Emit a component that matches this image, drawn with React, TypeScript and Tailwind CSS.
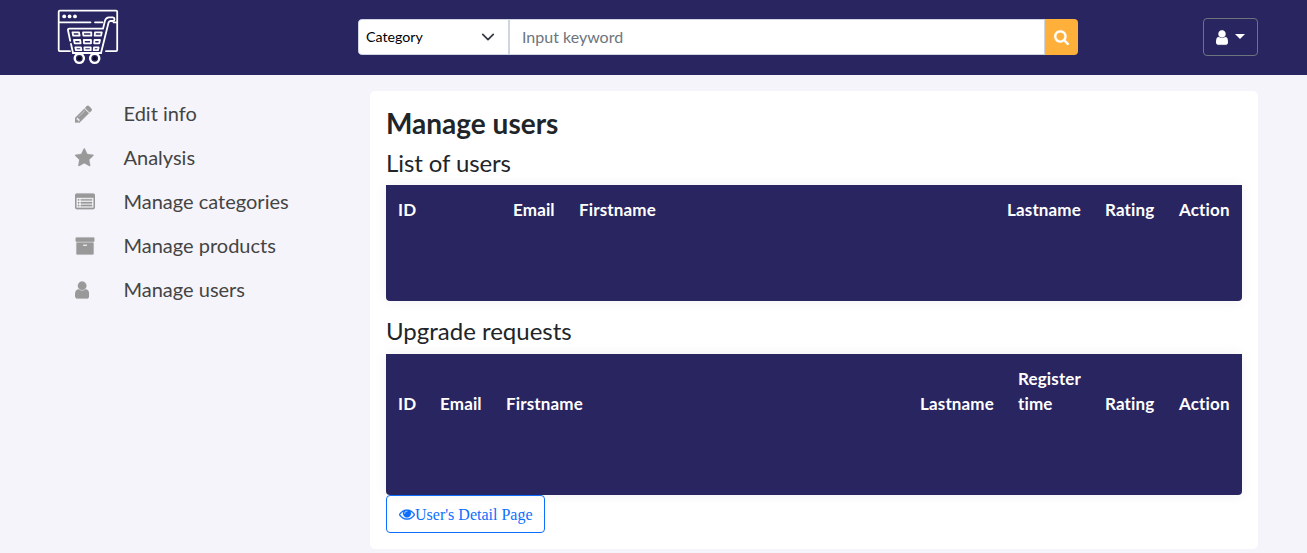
import React from "react";

type Glyph = { box: string; d: string };

const glyphs: Record<string, Glyph> = {
  pencil: {
    box: "128 0 1536 1792",
    d: "M491 1536l91-91-235-235-91 91v107h128v128h107zm523-928q0-22-22-22-10 0-17 7l-542 542q-7 7-7 17 0 22 22 22 10 0 17-7l542-542q7-7 7-17zm-54-192l416 416-832 832h-416v-416zm683 96q0 53-37 90l-166 166-416-416 166-165q36-38 90-38 53 0 91 38l235 234q37 39 37 91z",
  },
  star: {
    box: "64 0 1664 1792",
    d: "M1728 647q0 22-26 48l-363 354 86 500q1 7 1 20 0 21-10.5 35.5t-30.5 14.5q-19 0-40-12l-449-236-449 236q-22 12-40 12-21 0-31.5-14.5t-10.5-35.5q0-6 2-20l86-500-364-354q-25-27-25-48 0-37 56-46l502-73 225-455q19-41 49-41t49 41l225 455 502 73q56 9 56 46z",
  },
  list: {
    box: "0 0 1792 1792",
    d: "M384 1184v64q0 13-9.5 22.5t-22.5 9.5h-64q-13 0-22.5-9.5t-9.5-22.5v-64q0-13 9.5-22.5t22.5-9.5h64q13 0 22.5 9.5t9.5 22.5zM384 928v64q0 13-9.5 22.5t-22.5 9.5h-64q-13 0-22.5-9.5t-9.5-22.5v-64q0-13 9.5-22.5t22.5-9.5h64q13 0 22.5 9.5t9.5 22.5zM384 672v64q0 13-9.5 22.5t-22.5 9.5h-64q-13 0-22.5-9.5t-9.5-22.5v-64q0-13 9.5-22.5t22.5-9.5h64q13 0 22.5 9.5t9.5 22.5zM1536 1184v64q0 13-9.5 22.5t-22.5 9.5h-960q-13 0-22.5-9.5t-9.5-22.5v-64q0-13 9.5-22.5t22.5-9.5h960q13 0 22.5 9.5t9.5 22.5zM1536 928v64q0 13-9.5 22.5t-22.5 9.5h-960q-13 0-22.5-9.5t-9.5-22.5v-64q0-13 9.5-22.5t22.5-9.5h960q13 0 22.5 9.5t9.5 22.5zM1536 672v64q0 13-9.5 22.5t-22.5 9.5h-960q-13 0-22.5-9.5t-9.5-22.5v-64q0-13 9.5-22.5t22.5-9.5h960q13 0 22.5 9.5t9.5 22.5zM1664 1376v-832q0-13-9.5-22.5t-22.5-9.5h-1472q-13 0-22.5 9.5t-9.5 22.5v832q0 13 9.5 22.5t22.5 9.5h1472q13 0 22.5-9.5t9.5-22.5zM1792 288v1088q0 66-47 113t-113 47h-1472q-66 0-113-47t-47-113v-1088q0-66 47-113t113-47h1472q66 0 113 47t47 113z",
  },
  archive: {
    box: "0 0 1792 1792",
    d: "M1088 832q0-26-19-45t-45-19h-256q-26 0-45 19t-19 45 19 45 45 19h256q26 0 45-19t19-45zm576-192v960q0 26-19 45t-45 19h-1408q-26 0-45-19t-19-45v-960q0-26 19-45t45-19h1408q26 0 45 19t19 45zm64-448v256q0 26-19 45t-45 19h-1536q-26 0-45-19t-19-45v-256q0-26 19-45t45-19h1536q26 0 45 19t19 45z",
  },
  user: {
    box: "256 0 1280 1792",
    d: "M1536 1399q0 109-62.5 187t-150.5 78h-854q-88 0-150.5-78t-62.5-187q0-85 8.5-160.5t31.5-152 58.5-131 94-89 134.5-34.5q131 128 313 128t313-128q76 0 134.5 34.5t94 89 58.5 131 31.5 152 8.5 160.5zm-256-887q0 159-112.5 271.5t-271.5 112.5-271.5-112.5-112.5-271.5 112.5-271.5 271.5-112.5 271.5 112.5 112.5 271.5z",
  },
  eye: {
    box: "0 0 1792 1792",
    d: "M1664 960q-152-236-381-353 61 104 61 225 0 185-131.5 316.5t-316.5 131.5-316.5-131.5-131.5-316.5q0-121 61-225-229 117-381 353 133 205 333.5 326.5t434.5 121.5 434.5-121.5 333.5-326.5zm-720-384q0-20-14-34t-34-14q-125 0-214.5 89.5t-89.5 214.5q0 20 14 34t34 14 34-14 14-34q0-86 61-147t147-61q20 0 34-14t14-34zm848 384q0 34-20 69-140 230-376.5 368.5t-499.5 138.5-499.5-139-376.5-368q-20-35-20-69t20-69q140-229 376.5-368t499.5-139 499.5 139 376.5 368q20 35 20 69z",
  },
  search: {
    box: "64 0 1664 1792",
    d: "M1216 832q0-185-131.5-316.5t-316.5-131.5-316.5 131.5-131.5 316.5 131.5 316.5 316.5 131.5 316.5-131.5 131.5-316.5zm512 832q0 52-38 90t-90 38q-54 0-90-38l-343-342q-179 124-399 124-143 0-273.5-55.5t-225-150-150-225-55.5-273.5 55.5-273.5 150-225 225-150 273.5-55.5 273.5 55.5 225 150 150 225 55.5 273.5q0 220-124 399l343 343q37 37 37 90z",
  },
};

function Icon({ name, className }: { name: string; className: string }) {
  const g = glyphs[name];
  return (
    <svg viewBox={g.box} fill="currentColor" stroke="currentColor" strokeWidth="24" className={className} aria-hidden="true">
      <path d={g.d} fillRule={name === "list" ? "evenodd" : "nonzero"} />
    </svg>
  );
}

function Logo() {
  return (
    <svg width="62" height="56" viewBox="57 9 62 56" fill="none" stroke="#fff" strokeWidth="1.8" strokeLinecap="round" strokeLinejoin="round">
      <path d="M70 51.2H59.8Q58.7 51.2 58.7 50.1V11.8Q58.7 10.7 59.8 10.7H116Q117.2 10.7 117.2 11.8V50.1Q117.2 51.2 116 51.2H106" />
      <path d="M59 22.3H90.5M95 22.3H102.5M113.5 22.3H117" />
      <g fill="#fff" stroke="none">
        <circle cx="64.2" cy="16.4" r="1.9" />
        <circle cx="69.6" cy="16.4" r="1.9" />
        <circle cx="75" cy="16.4" r="1.9" />
      </g>
      <path d="M73 53L71 44M70.2 40.8L68 30.2Q67.7 28.7 69.3 28.7H103L105 20.6Q106 17.3 109 17.3H112.8Q114.5 17.5 114.5 19.2T112.8 21H110.6Q109 21.1 108.5 22.8L101 53" />
      <path d="M72.5 32.4H79L79.6 35.7H73.2ZM83 32.4H91.3V35.7H83.4ZM95 32.4H101.8L101 35.7H94.7ZM74 40H80.2L80.6 43.3H74.7ZM83.8 40H91V43.3H84ZM94.5 40H100L99.2 43.3H94.2ZM75.3 47.3H80.9L81.4 50.2H76ZM84.4 47.3H90.7V50.2H84.6ZM94 47.3H98.6L98 50.2H93.7Z" />
      <path d="M73 53H101" />
      <circle cx="79.3" cy="58.3" r="4.6" strokeWidth="2.4" fill="#292560" />
      <circle cx="94.7" cy="58.3" r="4.6" strokeWidth="2.4" fill="#292560" />
      <circle cx="79.3" cy="58.3" r="2" stroke="none" fill="#0b0918" />
      <circle cx="94.7" cy="58.3" r="2" stroke="none" fill="#0b0918" />
    </svg>
  );
}

const menu = [
  { icon: "pencil", label: "Edit info", size: "h-5 w-[17.14px]" },
  { icon: "star", label: "Analysis", size: "h-5 w-[18.57px]" },
  { icon: "list", label: "Manage categories", size: "h-5 w-5" },
  { icon: "archive", label: "Manage products", size: "h-5 w-5" },
  { icon: "user", label: "Manage users", size: "h-5 w-[14.28px]" },
];

const usersColumns = [
  { label: "ID", width: "w-[115px]" },
  { label: "Email", width: "w-[66px]" },
  { label: "Firstname", width: "w-[428px]" },
  { label: "Lastname", width: "w-[98px]" },
  { label: "Rating", width: "w-[74px]" },
  { label: "Action", width: "w-[75px]" },
];

const requestColumns = [
  { label: "ID", width: "w-[42px]" },
  { label: "Email", width: "w-[66px]" },
  { label: "Firstname", width: "w-[414px]" },
  { label: "Lastname", width: "w-[98px]" },
  { label: "Register time", width: "w-[87px]" },
  { label: "Rating", width: "w-[74px]" },
  { label: "Action", width: "w-[75px]" },
];

function Table({ columns, height }: { columns: { label: string; width: string }[]; height: string }) {
  return (
    <div className={`${height} rounded-b-[4px] bg-[#292560] shadow-[0_0_14px_rgba(0,0,0,0.06)]`}>
      <table className="w-full table-fixed text-left text-[17px] leading-[25px] font-bold tracking-[0.15px] text-white">
        <thead>
          <tr>
            {columns.map((c) => (
              <th key={c.label} className={`${c.width} p-3 pr-2 align-bottom`}>
                {c.label}
              </th>
            ))}
          </tr>
        </thead>
      </table>
    </div>
  );
}

export default function App() {
  return (
    <div className="h-[553px] overflow-hidden bg-[#f5f4fa] font-['Lato',sans-serif] text-[#212529] [font-variant-ligatures:none]">
      <header className="flex h-[75px] items-start bg-[#292560] pl-[57px]">
        <div className="w-[301px] shrink-0 pt-[9px]">
          <Logo />
        </div>
        <form className="mt-[19px] flex h-9 w-[720px] overflow-hidden rounded-[4px]">
          <div className="flex w-[152px] items-center justify-between rounded-l-[4px] border border-r-2 border-[#ced4e0] bg-white pr-[13px] pl-[7px] text-[14.2px] text-black">
            <span>Category</span>
            <svg width="14" height="14" viewBox="0 0 16 16" fill="none" stroke="#343a40" strokeWidth="2" strokeLinecap="round" strokeLinejoin="round">
              <path d="M2 5l6 6 6-6" />
            </svg>
          </div>
          <input placeholder="Input keyword" className="h-9 w-[535px] border-y border-r border-[#ced4e0] bg-white px-3 pb-[2px] text-[16px] outline-none placeholder:text-[#6c757d]" />
          <button type="button" className="flex flex-1 items-center justify-center bg-[#ffb03b] text-white">
            <Icon name="search" className="h-4 w-[15px]" />
          </button>
        </form>
        <button type="button" className="mt-[18px] ml-[125px] flex h-[38px] w-[55px] items-center rounded-[4px] border border-[#6c757d] pl-3 text-white">
          <Icon name="user" className="h-[17px] w-3" />
          <span className="mb-[1px] ml-[7px] border-x-[5px] border-t-[5px] border-x-transparent border-t-white" />
        </button>
      </header>
      <div className="flex">
        <nav className="w-[370px] shrink-0 pt-[17px] pl-[75px]">
          {menu.map((m) => (
            <a key={m.label} className="flex h-11 items-center">
              <span className="w-[48.5px] text-[#999]">
                <Icon name={m.icon} className={m.size} />
              </span>
              <span className="pb-[2px] text-[20px] text-[#444]">{m.label}</span>
            </a>
          ))}
        </nav>
        <main className="mt-4 h-[458px] w-[888px] rounded-[5px] bg-white px-4 pt-[15px]">
          <h1 className="h-[37px] text-[28px] leading-[34px] font-bold">Manage users</h1>
          <h2 className="h-[42px] pt-[5px] text-[24px] leading-[29px] tracking-[-0.1px]">List of users</h2>
          <Table columns={usersColumns} height="h-[116px]" />
          <h2 className="h-[53px] pt-[15px] text-[24px] leading-[29px]">Upgrade requests</h2>
          <Table columns={requestColumns} height="h-[141px]" />
          <button type="button" className="relative flex h-[38px] w-[159px] items-center rounded-[4px] border border-[#0d6efd] pl-3 font-['Liberation_Serif',serif] text-[16px] text-[#0d6efd]">
            <Icon name="eye" className="h-4 w-4" />
            <span className="pt-[2px] whitespace-nowrap">User's Detail Page</span>
          </button>
        </main>
      </div>
    </div>
  );
}
